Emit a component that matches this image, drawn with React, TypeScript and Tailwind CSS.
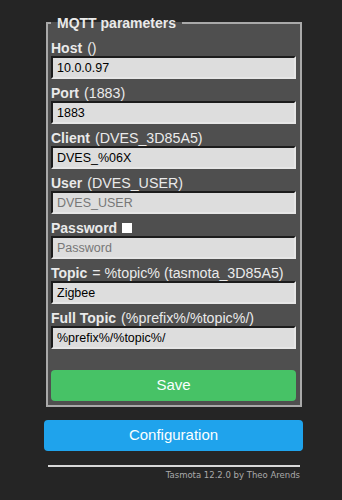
const fields = [
  { label: 'Host', hint: '()', value: '10.0.0.97' },
  { label: 'Port', hint: '(1883)', value: '1883' },
  { label: 'Client', hint: '(DVES_3D85A5)', value: 'DVES_%06X' },
  { label: 'User', hint: '(DVES_USER)', placeholder: 'DVES_USER' },
  { label: 'Password', checkbox: true, placeholder: 'Password' },
  { label: 'Topic', hint: '= %topic% (tasmota_3D85A5)', value: 'Zigbee' },
  { label: 'Full Topic', hint: '(%prefix%/%topic%/)', value: '%prefix%/%topic%/' },
];

export default function App() {
  return (
    <div className="min-h-[500px] bg-[#252525] font-['Liberation_Sans',Arial,sans-serif] text-[#eaeaea]">
      <div className="ml-[44px] w-[259px] pt-[15px]">
        <fieldset className="ml-[2px] mr-[1px] border-2 border-[#a9a9a9] bg-[#4f4f4f] pl-[3px] pr-[4px] pt-[9px] pb-[4px]">
          <legend className="px-[6px] text-[14px] leading-4 font-bold">MQTT parameters</legend>

          {fields.map((f, i) => (
            <div key={i} className={i > 0 ? 'mt-[6px]' : ''}>
              <div className="flex items-center text-[14px] leading-4">
                <b>{f.label}</b>
                {f.hint && <span className="ml-[5px] text-[14.25px]">{f.hint}</span>}
                {f.checkbox && <span className="ml-[5px] inline-block h-[10px] w-[10px] bg-white" />}
              </div>
              <input
                readOnly
                value={f.value ?? ''}
                placeholder={f.placeholder}
                className="box-border block h-[23px] w-full border-2 border-t-[#1c1c1c] border-l-[#1c1c1c] border-r-[#e6e6e6] border-b-[#e6e6e6] bg-[#dddddd] px-[4px] text-[12.5px] text-black outline-none placeholder:text-[#777]"
              />
            </div>
          ))}

          <button className="mt-[21px] block h-[31px] w-full rounded-[4px] bg-[#47c266] text-[15px] text-[#faffff]">
            Save
          </button>
        </fieldset>

        <button className="mt-[13px] block h-[31px] w-full rounded-[4px] bg-[#1fa3ec] text-[15px] text-[#faffff]">
          Configuration
        </button>

        <div className="ml-[4px] mr-[3px] mt-[14px] border-t-2 border-[#d8d8d8]" />
        <div className="mr-[3px] mt-[3px] text-right font-['DejaVu_Sans',Verdana,sans-serif] text-[8.5px] leading-[11px] text-[#aaaaaa]">
          Tasmota 12.2.0 by Theo Arends
        </div>
      </div>
    </div>
  );
}
